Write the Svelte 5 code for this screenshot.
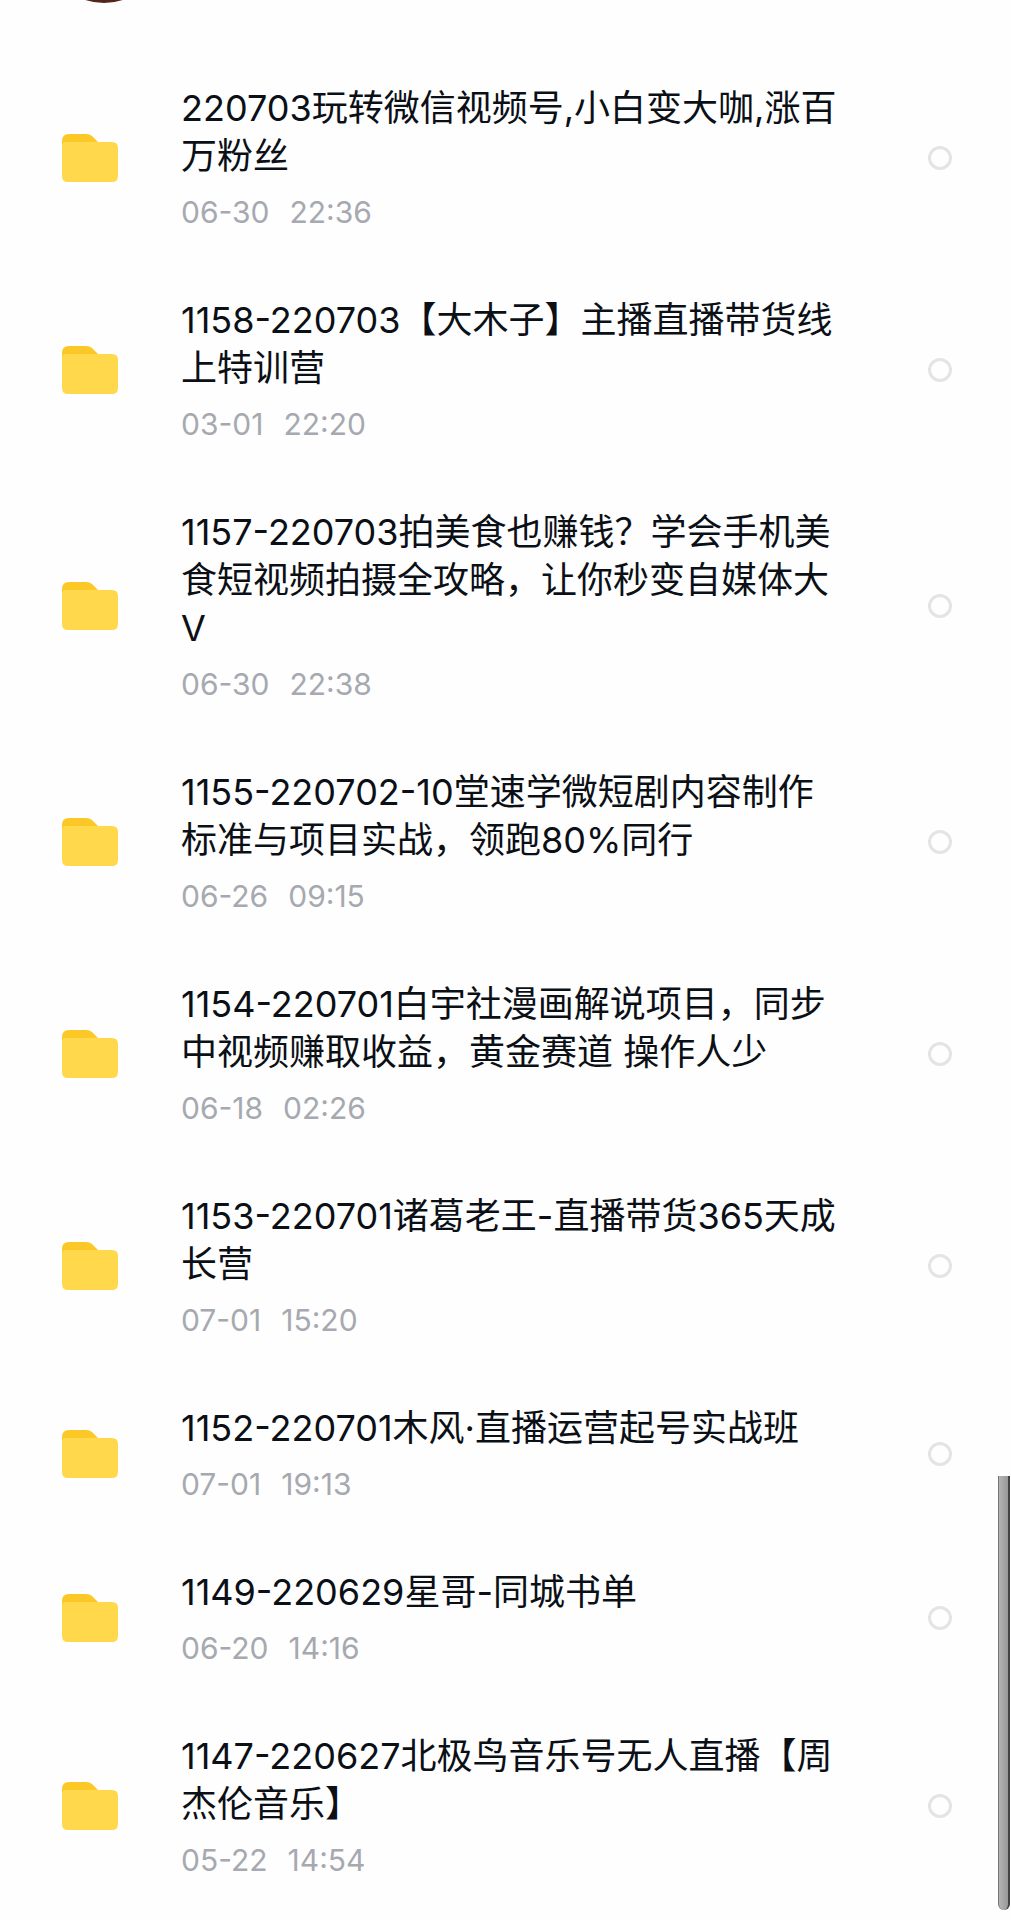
<script>
  const files = [
    { name: '220703玩转微信视频号,小白变大咖,涨百万粉丝', date: '06-30', time: '22:36' },
    { name: '1158-220703【大木子】主播直播带货线上特训营', date: '03-01', time: '22:20' },
    { name: '1157-220703拍美食也赚钱？学会手机美食短视频拍摄全攻略，让你秒变自媒体大V', date: '06-30', time: '22:38' },
    { name: '1155-220702-10堂速学微短剧内容制作标准与项目实战，领跑80%同行', date: '06-26', time: '09:15' },
    { name: '1154-220701白宇社漫画解说项目，同步中视频赚取收益，黄金赛道 操作人少', date: '06-18', time: '02:26' },
    { name: '1153-220701诸葛老王-直播带货365天成长营', date: '07-01', time: '15:20' },
    { name: '1152-220701木风·直播运营起号实战班', date: '07-01', time: '19:13' },
    { name: '1149-220629星哥-同城书单', date: '06-20', time: '14:16' },
    { name: '1147-220627北极鸟音乐号无人直播【周杰伦音乐】', date: '05-22', time: '14:54' }
  ];
  let selected = $state(files.map(() => false));
</script>

<main>
  <header>
    <svg class="avatar" viewBox="0 0 120 4" aria-hidden="true">
      <circle cx="60" cy="-57" r="60" fill="#55251b" />
    </svg>
  </header>
  <ul>
    {#each files as file, i}
      <li>
        <label for="file-{i}">
          <svg class="folder" viewBox="0 0 56 48" aria-hidden="true">
            <path d="M0 7Q0 0 7 0H24Q28 0 30 2L36 8V18H0Z" fill="#fbc827" />
            <path d="M0 12Q0 8 4 8H50Q56 8 56 14V42Q56 48 50 48H6Q0 48 0 42Z" fill="#ffd84b" />
          </svg>
          <span class="info">
            <span class="name">{file.name}</span>
            <span class="meta"><span>{file.date}</span><span>{file.time}</span></span>
          </span>
          <input id="file-{i}" type="checkbox" bind:checked={selected[i]} />
        </label>
      </li>
    {/each}
  </ul>
  <div class="scrollbar" aria-hidden="true"></div>
</main>

<style>
  :global(body) {
    margin: 0;
    background: #fefefe;
  }

  main {
    position: relative;
    min-height: 100vh;
    font-family: Inter, 'Noto Sans CJK SC', sans-serif;
    font-weight: 400;
    color: #0b0f16;
  }

  header {
    height: 52px;
    padding-left: 44px;
  }

  .avatar {
    display: block;
    width: 120px;
    height: 4px;
  }

  ul {
    margin: 0;
    padding: 0;
    list-style: none;
  }

  label {
    display: flex;
    align-items: center;
    padding: 32px 59px 32px 62px;
  }

  .folder {
    flex: none;
    width: 56px;
    height: 48px;
    margin-right: 63px;
  }

  .info {
    flex: 1;
    display: flex;
    flex-direction: column;
    gap: 12px;
    margin-right: 83px;
  }

  .name {
    font-size: 36px;
    line-height: 48px;
  }

  .meta {
    display: flex;
    gap: 20px;
    font-size: 30px;
    line-height: 40px;
    color: #a6a9b0;
  }

  input {
    appearance: none;
    flex: none;
    box-sizing: border-box;
    width: 24px;
    height: 24px;
    margin: 0;
    border: 3px solid #e4e4e4;
    border-radius: 50%;
    background: #fefefe;
  }

  input:checked {
    border-color: #ffd84b;
    background: #ffd84b;
  }

  .scrollbar {
    position: absolute;
    right: 1px;
    bottom: 10px;
    box-sizing: border-box;
    width: 12px;
    height: 434px;
    border-left: 1px solid #777;
    border-right: 2px solid #444;
    border-radius: 0 0 6px 6px;
    background: linear-gradient(90deg, #b4b4b4, #999);
  }
</style>
